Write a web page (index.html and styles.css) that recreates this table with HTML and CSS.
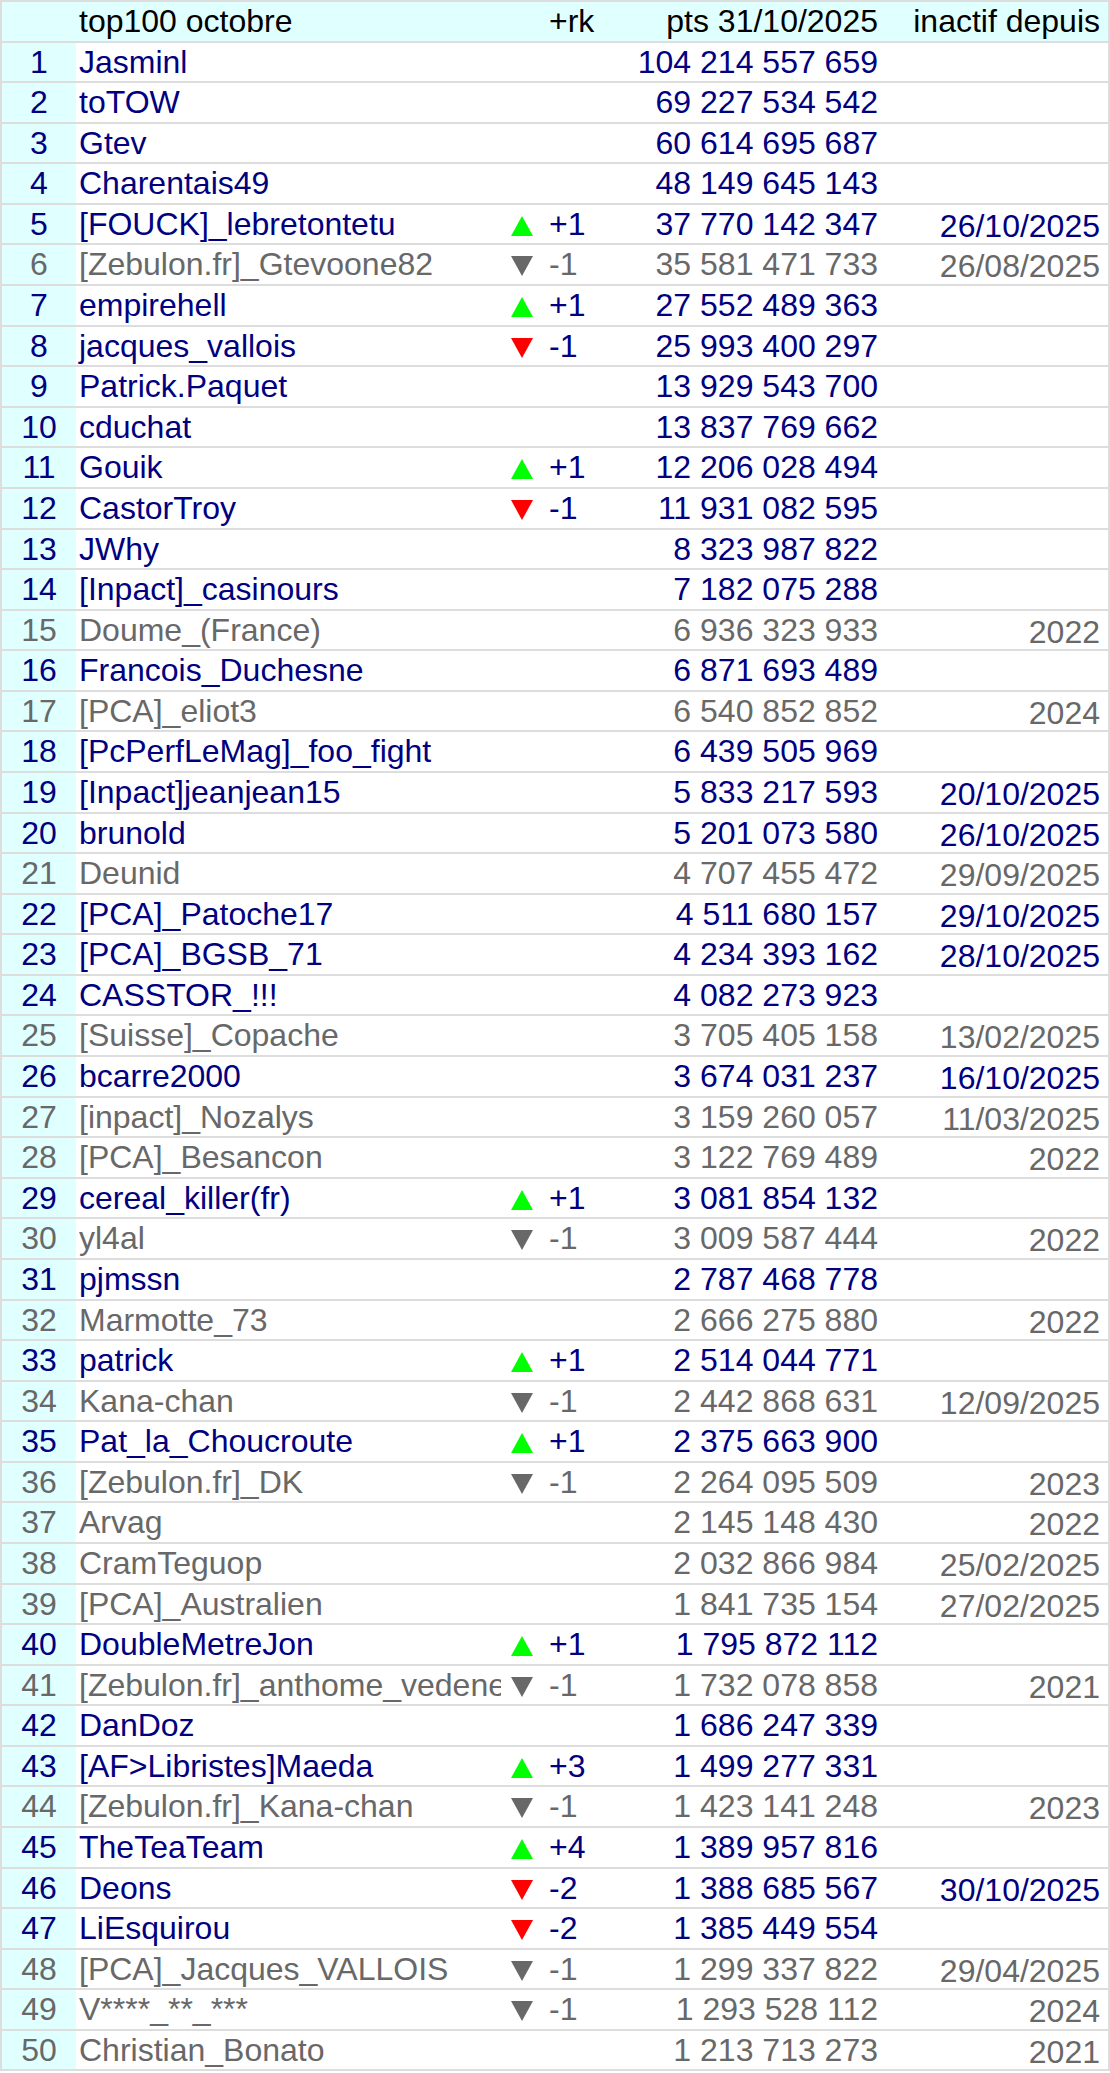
FILE: index.html
```html
<!DOCTYPE html>
<html lang="fr">
<head>
<meta charset="utf-8">
<title>top100 octobre</title>
<link rel="stylesheet" href="styles.css">
</head>
<body>
<table class="rank-table">
<colgroup>
<col class="c-rank"><col class="c-name"><col class="c-arrow"><col class="c-delta"><col class="c-pts"><col class="c-date">
</colgroup>
<thead>
<tr class="head"><th class="rank"></th><th class="name">top100 octobre</th><th class="arrow"></th><th class="delta">+rk</th><th class="pts">pts 31/10/2025</th><th class="date">inactif depuis</th></tr>
</thead>
<tbody>
<tr class="on"><td class="rank">1</td><td class="name">Jasminl</td><td class="arrow"></td><td class="delta"></td><td class="pts">104 214 557 659</td><td class="date"></td></tr>
<tr class="on"><td class="rank">2</td><td class="name">toTOW</td><td class="arrow"></td><td class="delta"></td><td class="pts">69 227 534 542</td><td class="date"></td></tr>
<tr class="on"><td class="rank">3</td><td class="name">Gtev</td><td class="arrow"></td><td class="delta"></td><td class="pts">60 614 695 687</td><td class="date"></td></tr>
<tr class="on"><td class="rank">4</td><td class="name">Charentais49</td><td class="arrow"></td><td class="delta"></td><td class="pts">48 149 645 143</td><td class="date"></td></tr>
<tr class="on"><td class="rank">5</td><td class="name">[FOUCK]_lebretontetu</td><td class="arrow"><span class="tri up"></span></td><td class="delta">+1</td><td class="pts">37 770 142 347</td><td class="date">26/10/2025</td></tr>
<tr class="off"><td class="rank">6</td><td class="name">[Zebulon.fr]_Gtevoone82</td><td class="arrow"><span class="tri dn"></span></td><td class="delta">-1</td><td class="pts">35 581 471 733</td><td class="date">26/08/2025</td></tr>
<tr class="on"><td class="rank">7</td><td class="name">empirehell</td><td class="arrow"><span class="tri up"></span></td><td class="delta">+1</td><td class="pts">27 552 489 363</td><td class="date"></td></tr>
<tr class="on"><td class="rank">8</td><td class="name">jacques_vallois</td><td class="arrow"><span class="tri dn"></span></td><td class="delta">-1</td><td class="pts">25 993 400 297</td><td class="date"></td></tr>
<tr class="on"><td class="rank">9</td><td class="name">Patrick.Paquet</td><td class="arrow"></td><td class="delta"></td><td class="pts">13 929 543 700</td><td class="date"></td></tr>
<tr class="on"><td class="rank">10</td><td class="name">cduchat</td><td class="arrow"></td><td class="delta"></td><td class="pts">13 837 769 662</td><td class="date"></td></tr>
<tr class="on"><td class="rank">11</td><td class="name">Gouik</td><td class="arrow"><span class="tri up"></span></td><td class="delta">+1</td><td class="pts">12 206 028 494</td><td class="date"></td></tr>
<tr class="on"><td class="rank">12</td><td class="name">CastorTroy</td><td class="arrow"><span class="tri dn"></span></td><td class="delta">-1</td><td class="pts">11 931 082 595</td><td class="date"></td></tr>
<tr class="on"><td class="rank">13</td><td class="name">JWhy</td><td class="arrow"></td><td class="delta"></td><td class="pts">8 323 987 822</td><td class="date"></td></tr>
<tr class="on"><td class="rank">14</td><td class="name">[Inpact]_casinours</td><td class="arrow"></td><td class="delta"></td><td class="pts">7 182 075 288</td><td class="date"></td></tr>
<tr class="off"><td class="rank">15</td><td class="name">Doume_(France)</td><td class="arrow"></td><td class="delta"></td><td class="pts">6 936 323 933</td><td class="date">2022</td></tr>
<tr class="on"><td class="rank">16</td><td class="name">Francois_Duchesne</td><td class="arrow"></td><td class="delta"></td><td class="pts">6 871 693 489</td><td class="date"></td></tr>
<tr class="off"><td class="rank">17</td><td class="name">[PCA]_eliot3</td><td class="arrow"></td><td class="delta"></td><td class="pts">6 540 852 852</td><td class="date">2024</td></tr>
<tr class="on"><td class="rank">18</td><td class="name">[PcPerfLeMag]_foo_fight</td><td class="arrow"></td><td class="delta"></td><td class="pts">6 439 505 969</td><td class="date"></td></tr>
<tr class="on"><td class="rank">19</td><td class="name">[Inpact]jeanjean15</td><td class="arrow"></td><td class="delta"></td><td class="pts">5 833 217 593</td><td class="date">20/10/2025</td></tr>
<tr class="on"><td class="rank">20</td><td class="name">brunold</td><td class="arrow"></td><td class="delta"></td><td class="pts">5 201 073 580</td><td class="date">26/10/2025</td></tr>
<tr class="off"><td class="rank">21</td><td class="name">Deunid</td><td class="arrow"></td><td class="delta"></td><td class="pts">4 707 455 472</td><td class="date">29/09/2025</td></tr>
<tr class="on"><td class="rank">22</td><td class="name">[PCA]_Patoche17</td><td class="arrow"></td><td class="delta"></td><td class="pts">4 511 680 157</td><td class="date">29/10/2025</td></tr>
<tr class="on"><td class="rank">23</td><td class="name">[PCA]_BGSB_71</td><td class="arrow"></td><td class="delta"></td><td class="pts">4 234 393 162</td><td class="date">28/10/2025</td></tr>
<tr class="on"><td class="rank">24</td><td class="name">CASSTOR_!!!</td><td class="arrow"></td><td class="delta"></td><td class="pts">4 082 273 923</td><td class="date"></td></tr>
<tr class="off"><td class="rank">25</td><td class="name">[Suisse]_Copache</td><td class="arrow"></td><td class="delta"></td><td class="pts">3 705 405 158</td><td class="date">13/02/2025</td></tr>
<tr class="on"><td class="rank">26</td><td class="name">bcarre2000</td><td class="arrow"></td><td class="delta"></td><td class="pts">3 674 031 237</td><td class="date">16/10/2025</td></tr>
<tr class="off"><td class="rank">27</td><td class="name">[inpact]_Nozalys</td><td class="arrow"></td><td class="delta"></td><td class="pts">3 159 260 057</td><td class="date">11/03/2025</td></tr>
<tr class="off"><td class="rank">28</td><td class="name">[PCA]_Besancon</td><td class="arrow"></td><td class="delta"></td><td class="pts">3 122 769 489</td><td class="date">2022</td></tr>
<tr class="on"><td class="rank">29</td><td class="name">cereal_killer(fr)</td><td class="arrow"><span class="tri up"></span></td><td class="delta">+1</td><td class="pts">3 081 854 132</td><td class="date"></td></tr>
<tr class="off"><td class="rank">30</td><td class="name">yl4al</td><td class="arrow"><span class="tri dn"></span></td><td class="delta">-1</td><td class="pts">3 009 587 444</td><td class="date">2022</td></tr>
<tr class="on"><td class="rank">31</td><td class="name">pjmssn</td><td class="arrow"></td><td class="delta"></td><td class="pts">2 787 468 778</td><td class="date"></td></tr>
<tr class="off"><td class="rank">32</td><td class="name">Marmotte_73</td><td class="arrow"></td><td class="delta"></td><td class="pts">2 666 275 880</td><td class="date">2022</td></tr>
<tr class="on"><td class="rank">33</td><td class="name">patrick</td><td class="arrow"><span class="tri up"></span></td><td class="delta">+1</td><td class="pts">2 514 044 771</td><td class="date"></td></tr>
<tr class="off"><td class="rank">34</td><td class="name">Kana-chan</td><td class="arrow"><span class="tri dn"></span></td><td class="delta">-1</td><td class="pts">2 442 868 631</td><td class="date">12/09/2025</td></tr>
<tr class="on"><td class="rank">35</td><td class="name">Pat_la_Choucroute</td><td class="arrow"><span class="tri up"></span></td><td class="delta">+1</td><td class="pts">2 375 663 900</td><td class="date"></td></tr>
<tr class="off"><td class="rank">36</td><td class="name">[Zebulon.fr]_DK</td><td class="arrow"><span class="tri dn"></span></td><td class="delta">-1</td><td class="pts">2 264 095 509</td><td class="date">2023</td></tr>
<tr class="off"><td class="rank">37</td><td class="name">Arvag</td><td class="arrow"></td><td class="delta"></td><td class="pts">2 145 148 430</td><td class="date">2022</td></tr>
<tr class="off"><td class="rank">38</td><td class="name">CramTeguop</td><td class="arrow"></td><td class="delta"></td><td class="pts">2 032 866 984</td><td class="date">25/02/2025</td></tr>
<tr class="off"><td class="rank">39</td><td class="name">[PCA]_Australien</td><td class="arrow"></td><td class="delta"></td><td class="pts">1 841 735 154</td><td class="date">27/02/2025</td></tr>
<tr class="on"><td class="rank">40</td><td class="name">DoubleMetreJon</td><td class="arrow"><span class="tri up"></span></td><td class="delta">+1</td><td class="pts">1 795 872 112</td><td class="date"></td></tr>
<tr class="off"><td class="rank">41</td><td class="name">[Zebulon.fr]_anthome_vedene</td><td class="arrow"><span class="tri dn"></span></td><td class="delta">-1</td><td class="pts">1 732 078 858</td><td class="date">2021</td></tr>
<tr class="on"><td class="rank">42</td><td class="name">DanDoz</td><td class="arrow"></td><td class="delta"></td><td class="pts">1 686 247 339</td><td class="date"></td></tr>
<tr class="on"><td class="rank">43</td><td class="name">[AF&gt;Libristes]Maeda</td><td class="arrow"><span class="tri up"></span></td><td class="delta">+3</td><td class="pts">1 499 277 331</td><td class="date"></td></tr>
<tr class="off"><td class="rank">44</td><td class="name">[Zebulon.fr]_Kana-chan</td><td class="arrow"><span class="tri dn"></span></td><td class="delta">-1</td><td class="pts">1 423 141 248</td><td class="date">2023</td></tr>
<tr class="on"><td class="rank">45</td><td class="name">TheTeaTeam</td><td class="arrow"><span class="tri up"></span></td><td class="delta">+4</td><td class="pts">1 389 957 816</td><td class="date"></td></tr>
<tr class="on"><td class="rank">46</td><td class="name">Deons</td><td class="arrow"><span class="tri dn"></span></td><td class="delta">-2</td><td class="pts">1 388 685 567</td><td class="date">30/10/2025</td></tr>
<tr class="on"><td class="rank">47</td><td class="name">LiEsquirou</td><td class="arrow"><span class="tri dn"></span></td><td class="delta">-2</td><td class="pts">1 385 449 554</td><td class="date"></td></tr>
<tr class="off"><td class="rank">48</td><td class="name">[PCA]_Jacques_VALLOIS</td><td class="arrow"><span class="tri dn"></span></td><td class="delta">-1</td><td class="pts">1 299 337 822</td><td class="date">29/04/2025</td></tr>
<tr class="off"><td class="rank">49</td><td class="name">V****_**_***</td><td class="arrow"><span class="tri dn"></span></td><td class="delta">-1</td><td class="pts">1 293 528 112</td><td class="date">2024</td></tr>
<tr class="off"><td class="rank">50</td><td class="name">Christian_Bonato</td><td class="arrow"></td><td class="delta"></td><td class="pts">1 213 713 273</td><td class="date">2021</td></tr>
</tbody>
</table>
</body>
</html>
```

FILE: styles.css
```css
html, body {
  margin: 0;
  padding: 0;
  background: #ffffff;
}

body {
  font-family: "Liberation Sans", Arial, sans-serif;
  font-size: 32px;
}

.rank-table {
  width: 1110px;
  table-layout: fixed;
  border-collapse: separate;
  border-spacing: 0;
  border-top: 2px solid #dddddd;
  border-left: 2px solid #dddddd;
  border-right: 2px solid #dddddd;
}

.c-rank { width: 74px; }
.c-name { width: 425px; }
.c-arrow { width: 46px; }
.c-delta { width: 73px; }
.c-pts { width: 262px; }
.c-date { width: 226px; }

.rank-table th,
.rank-table td {
  padding: 0;
  line-height: 38.58px;
  border-bottom: 2px solid #dddddd;
  white-space: nowrap;
  overflow: hidden;
  font-weight: normal;
  vertical-align: top;
}

.head th {
  background: #e0ffff;
  color: #000000;
  text-align: left;
}

.on { color: #000080; }
.off { color: #686868; }

.rank-table .rank {
  background: #e0ffff;
  text-align: center;
}

.rank-table .name {
  padding-left: 3px;
}

.rank-table .arrow {
  padding-top: 11px;
  padding-left: 10px;
  line-height: 27.58px;
}

.rank-table .delta {
  padding-left: 2px;
  text-align: left;
}

.rank-table .pts {
  text-align: right;
  padding-right: 4px;
}

.rank-table .date {
  text-align: right;
  padding-right: 8px;
}

.rank-table td.date {
  padding-top: 4px;
  line-height: 34.58px;
}

.rank-table th.arrow {
  padding-top: 0;
  line-height: 38.58px;
}

.tri {
  display: block;
  width: 0;
  height: 0;
  border-left: 11px solid transparent;
  border-right: 11px solid transparent;
}

.tri.up {
  border-bottom: 20px solid #00ff00;
}

.tri.dn {
  border-top: 20px solid #ff0000;
}

.off .tri.dn {
  border-top-color: #686868;
}
```
